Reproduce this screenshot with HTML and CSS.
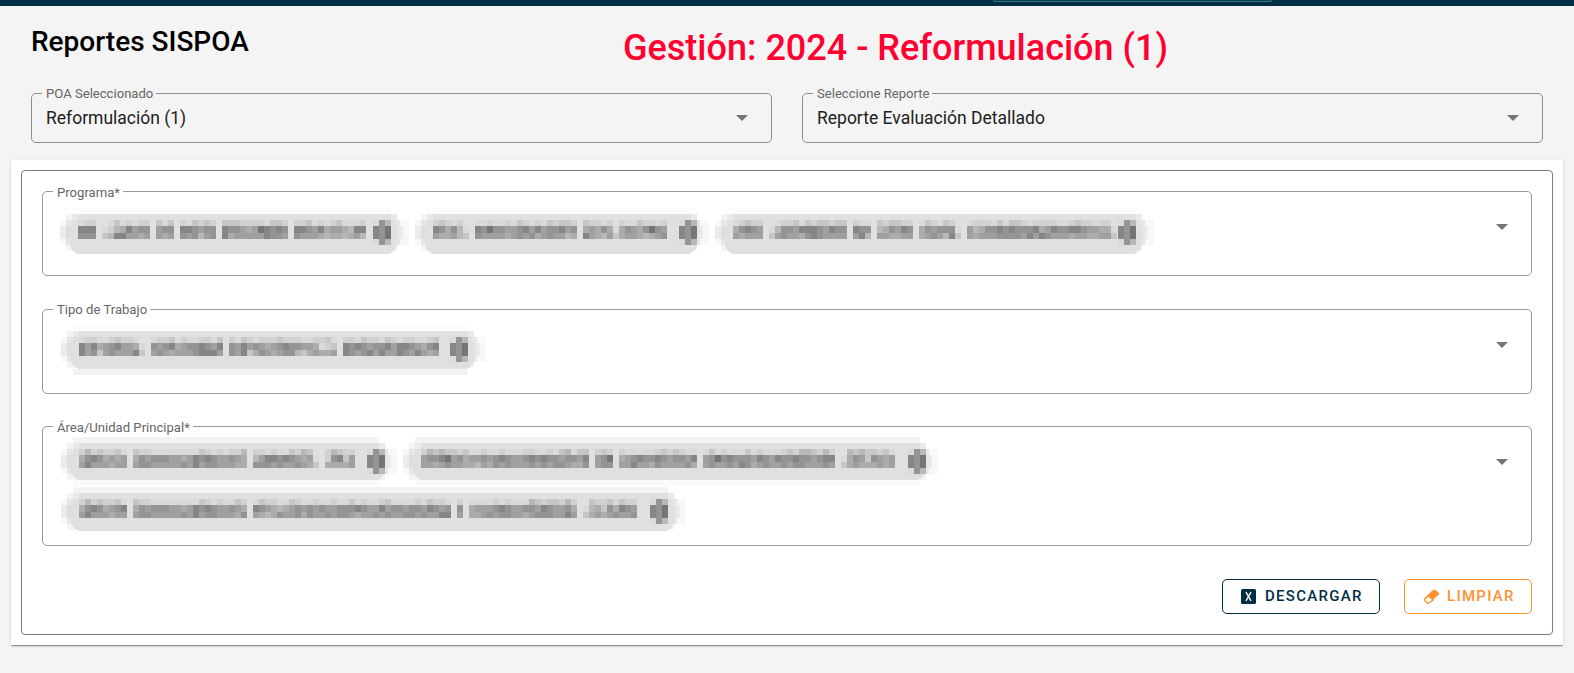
FILE: index.html
```html
<!DOCTYPE html>
<html lang="es">
<head>
<meta charset="utf-8">
<title>Reportes SISPOA</title>
<link rel="stylesheet" href="styles.css">
</head>
<body>
<header class="topbar"><div class="topbar-field"></div></header>
<main>
  <div class="heading">
    <h1 class="title">Reportes SISPOA</h1>
    <h2 class="period">Gestión: 2024 - Reformulación (1)</h2>
  </div>
  <div class="selectors">
    <div class="field select">
      <span class="label on-gray">POA Seleccionado</span>
      <span class="value">Reformulación (1)</span>
      <svg class="arrow" viewBox="0 0 12 6"><path d="M0 0h12L6 6z"/></svg>
    </div>
    <div class="field select">
      <span class="label on-gray">Seleccione Reporte</span>
      <span class="value">Reporte Evaluación Detallado</span>
      <svg class="arrow" viewBox="0 0 12 6"><path d="M0 0h12L6 6z"/></svg>
    </div>
  </div>
  <section class="card">
    <div class="panel">
      <div class="field multi programa">
        <span class="label">Programa*</span>
        <div class="chips" data-group="programa"></div>
        <svg class="arrow" viewBox="0 0 12 6"><path d="M0 0h12L6 6z"/></svg>
      </div>
      <div class="field multi trabajo">
        <span class="label">Tipo de Trabajo</span>
        <div class="chips" data-group="trabajo"></div>
        <svg class="arrow" viewBox="0 0 12 6"><path d="M0 0h12L6 6z"/></svg>
      </div>
      <div class="field multi area">
        <span class="label">Área/Unidad Principal*</span>
        <div class="chips" data-group="area"></div>
        <svg class="arrow" viewBox="0 0 12 6"><path d="M0 0h12L6 6z"/></svg>
      </div>
      <div class="actions">
        <button class="btn download">
          <svg class="icon-file" viewBox="0 0 15 15"><rect width="15" height="15" rx="1.5" fill="currentColor"/><path d="M5 3.2 10 11.8M10 3.2 5 11.8" stroke="#fff" stroke-width="1.4"/></svg>
          <span>DESCARGAR</span>
        </button>
        <button class="btn clear">
          <svg class="icon-eraser" viewBox="0 0 17 16"><path d="M9.3 1.5 1.2 9.6q-1 1 0 2l2.6 2.6q1.2 1 2.4 0L15.7 5.8q.9-1 0-2L13 1.3q-1-.8-2-.3z" fill="currentColor"/><path d="M5.6 6.7 10 11.1 6 14.1q-.8.6-1.7-.2L1.9 11.5q-.6-.7 0-1.4z" fill="#fff" stroke="currentColor" stroke-width="1.3"/></svg>
          <span>LIMPIAR</span>
        </button>
      </div>
    </div>
  </section>
</main>
<script src="chips.js"></script>
</body>
</html>
```
FILE: styles.css
```css
* { box-sizing: border-box; }
body { margin: 0; background: #f4f4f4; font-family: Roboto, "Liberation Sans", sans-serif; color: #000; }
main { height: 667px; }
.topbar { height: 6px; background: #002e45; padding-left: 993px; }
.topbar-field { width: 279px; height: 2px; background: #034256; border: 1px solid #397487; border-top: 0; border-radius: 0 0 4px 4px; }
.heading { display: grid; grid-template-columns: 592px 1fr; height: 87px; padding-left: 31px; }
h1, h2 { margin: 0; font-weight: 500; white-space: nowrap; }
.title { font-size: 28px; line-height: 36px; padding-top: 18px; }
.period { font-size: 36px; line-height: 44px; padding-top: 20px; color: #ff0030; }
.selectors { display: grid; grid-template-columns: 1fr 1fr; gap: 30px; padding: 0 31px; height: 67px; }
.field { position: relative; border: 1px solid #999; border-radius: 5px; }
.select { height: 50px; display: flex; align-items: center; justify-content: space-between; padding: 0 23px 0 14px; border-color: #8e8e8e; }
.label { position: absolute; top: -8px; left: 10px; padding: 0 3px 0 4px; background: #fff; color: #666; font-size: 13.1px; line-height: 17px; white-space: nowrap; }
.on-gray { top: -9px; background: #f4f4f4; }
.value { font-size: 17.5px; color: #212121; }
.arrow { display: block; width: 12px; height: 6px; fill: #757575; flex: none; }
.card { margin: 0 11px; padding: 10px; height: 485px; background: #fff; box-shadow: 0 2px 1px -1px rgba(0,0,0,.25), 0 1px 1px rgba(0,0,0,.14), 0 1px 3px rgba(0,0,0,.12); }
.panel { height: 465px; border: 1px solid #7b7b7b; border-radius: 4px; padding: 20px; }
.multi { display: flex; justify-content: space-between; align-items: flex-start; padding-right: 23px; }
.multi .arrow { margin-top: 32px; }
.programa, .trabajo { height: 85px; margin-bottom: 33px; }
.programa .chips { padding: 16px 0 0 17px; }
.trabajo .chips { padding: 15px 0 0 18px; }
.trabajo { margin-bottom: 32px; }
.trabajo .label { top: -9px; }
.area { height: 120px; }
.area .chips { padding: 10px 0 0 18px; width: 1100px; }
.chips { display: flex; flex-wrap: wrap; column-gap: 6px; }
.chip { display: block; height: 50px; }
.actions { display: flex; justify-content: flex-end; gap: 24px; margin-top: 33px; }
.btn { display: flex; align-items: center; height: 35px; padding: 0 0 0 18px; background: #fff; border: 1px solid currentColor; border-radius: 5px; font: 500 15px/17px Roboto, sans-serif; letter-spacing: 1.28px; }
.download { width: 158px; color: #002e45; gap: 9px; }
.clear { width: 128px; color: #ff9130; gap: 7px; }
.icon-file { width: 15px; height: 15px; }
.icon-eraser { width: 17px; height: 16px; }
```
FILE: chips.js
```javascript
// Shades for mosaic cells, from light to dark.
const SHADES = { 3: '#e9e9e9', 4: '#dadada', 5: '#d1d1d1', 6: '#c6c6c6', 7: '#b8b8b8', 8: '#acacac', 9: '#a0a0a0', A: '#949494', B: '#868686', C: '#757575' };

// Redacted chips. words: cell count of each word, negative for a gap, 0 for a hyphen cell.
// rows: shades of the word cells, in order. icon: distance of the remove icon from the right edge.
const GROUPS = {
  programa: [
    { w: 349, h: 40, icon: 36, words: [3, -1, 0, 7, -1, 3, -1, 6, -1, 11, -1, 12], rows: [
      '455464545564654656566655554665556454564445',
      'BBB578B9AA9AABBA9AABAA989CBABABBA9B89987',
      'AAA7BB9989989A9A79AB899999BAA9A99987887897'] },
    { w: 294, h: 40, icon: 30, words: [5, 0, -1, 17, -1, 5, 0, 8], rows: [
      '56545445445465454656656554554465545',
      'BA8A7BACAA99AB9B9AAB9A898A88A98ACA99',
      '98897A999989A9A89A9978B98798998789AA9B'] },
    { w: 439, h: 40, icon: 36, words: [5, -1, 0, 12, -1, 3, -1, 6, -1, 6, 0, -1, 24, 0], rows: [
      '456554556465665665446566554654654555464665455554',
      '8ABA97AA9BBBA9BAABAA78A9BA8A9AAA978AABABAAAB89BAABBA998898',
      '989999A998ABA99999B799889989A97B98999AAAA9B9BA999899889999'] }
  ],
  trabajo: [
    { w: 425, h: 38, icon: 36, tail: true, words: [10, 0, -1, 12, -1, 18, -1, 16], rows: [
      '4554456554455645445546546545556555445564554655465',
      'B9B89AB998A9AB89AABA9BA9B9A989ABAA998456BABA9AAB9BBA98AB98',
      'B9A69A999B9A98999ABBB9A9B68A989AA7689889BA9AB9B99BA9B9897A'] }
  ],
  area: [
    { w: 336, h: 37, icon: 30, halo: true, tail: true, words: [8, -1, 19, -1, 10, 0, -1, 5], rows: [
      '57565564655444444446545455755454465765765',
      '8ABA89898A9AAA9989BABA99A9879BBABA9895AB69',
      '9B9998999AA99999A9B9AA99988AAA9A99A988888'] },
    { w: 535, h: 37, icon: 30, halo: true, tail: true, words: [11, 17, -1, 3, -1, 13, -1, 22, -1, 0, 8], rows: [
      '57676656445445444554454674665655444445656544464544464544456577657',
      '9AABC9A899A9ABA99ABABAA9AA9B9AC89ABAABA9AA9B9ACABAAA9BA9BAABAA9ABB8A96A98',
      '9989A9988798A9A999A9A9AA988A9AA99B998A9999A89A99A9BA89A99A9AA999A98988898'] },
    { w: 625, h: 38, icon: 36, halo: true, words: [8, -1, 19, -1, 33, -1, 1, -1, 18, -1, 0, 8], rows: [
      '5756556465544444444654544654655446544544544645445644445465545444454544476566',
      '8ABA89AB8A9AAA9989BABA99A98BA98789A9A9A99AAABA99B9AA9AA9BA9AA8999ABA99AA9BA99A8786A8BA9',
      '9B9998999AA99999A9B9AA9998A9878A99A8A99A9AA9899A9A99AA9A99BB9889A9AA9989AAA99B98989A99A'] }
  ]
};

const NS = 'http://www.w3.org/2000/svg';
const CELL = 6;
const TOP = 6;
const EDGES = [6, 12, 19, 25, 31];
const ICON = ['4A7', 'BAC', 'BAC', '4A7'];

function rect(svg, x, y, w, h, fill, rx) {
  const r = document.createElementNS(NS, 'rect');
  for (const [k, v] of Object.entries({ x, y, width: w, height: h, fill, rx: rx || 0 })) r.setAttribute(k, v);
  svg.appendChild(r);
}

function cell(svg, x, row, shade) {
  rect(svg, x, TOP + EDGES[row], CELL, EDGES[row + 1] - EDGES[row], SHADES[shade]);
}

function drawChip(chip) {
  const svg = document.createElementNS(NS, 'svg');
  const { w, h } = chip;
  svg.setAttribute('class', 'chip');
  svg.setAttribute('width', w);
  svg.setAttribute('shape-rendering', 'crispEdges');
  rect(svg, 12, 0, w - 30, TOP, chip.halo ? '#f3f3f3' : '#fcfcfc');
  if (chip.tail) rect(svg, 12, TOP + h, w - 30, 6, chip.halo ? '#fafafa' : '#f2f2f2');
  // Soft stepped ends, then the solid body.
  rect(svg, 0, TOP + 6, w, 25, '#f8f8f8');
  rect(svg, 0, TOP + 12, w - 6, 13, '#ebebeb');
  rect(svg, 6, TOP, w - 18, 37, '#f4f4f4');
  rect(svg, 6, TOP + 6, w - 15, 25, '#e6e6e6');
  rect(svg, 6, TOP + 12, w - 18, 13, '#dedede');
  rect(svg, 10, TOP + 10, w - 22, h - 10, '#e0e0e0', 10);
  rect(svg, 12, TOP, w - 27, 31, '#e0e0e0');
  rect(svg, 12, TOP, 6, 6, '#e9e9e9');
  rect(svg, w - 18, TOP, 6, 6, '#e9e9e9');

  let x = 18;
  let n = 0;
  for (const word of chip.words) {
    if (word < 0) {
      x -= word * CELL;
    } else if (word === 0) {
      cell(svg, x, 1, '4');
      cell(svg, x, 2, '6');
      x += CELL;
    } else {
      for (let i = 0; i < word; i++, n++, x += CELL) {
        chip.rows.forEach((row, r) => cell(svg, x, r, row[n % row.length]));
      }
    }
  }
  ICON.forEach((row, r) => [...row].forEach((c, i) => cell(svg, w - chip.icon + i * CELL, r, c)));
  return svg;
}

document.querySelectorAll('.chips').forEach(box => {
  GROUPS[box.dataset.group].forEach(chip => box.appendChild(drawChip(chip)));
});
```
